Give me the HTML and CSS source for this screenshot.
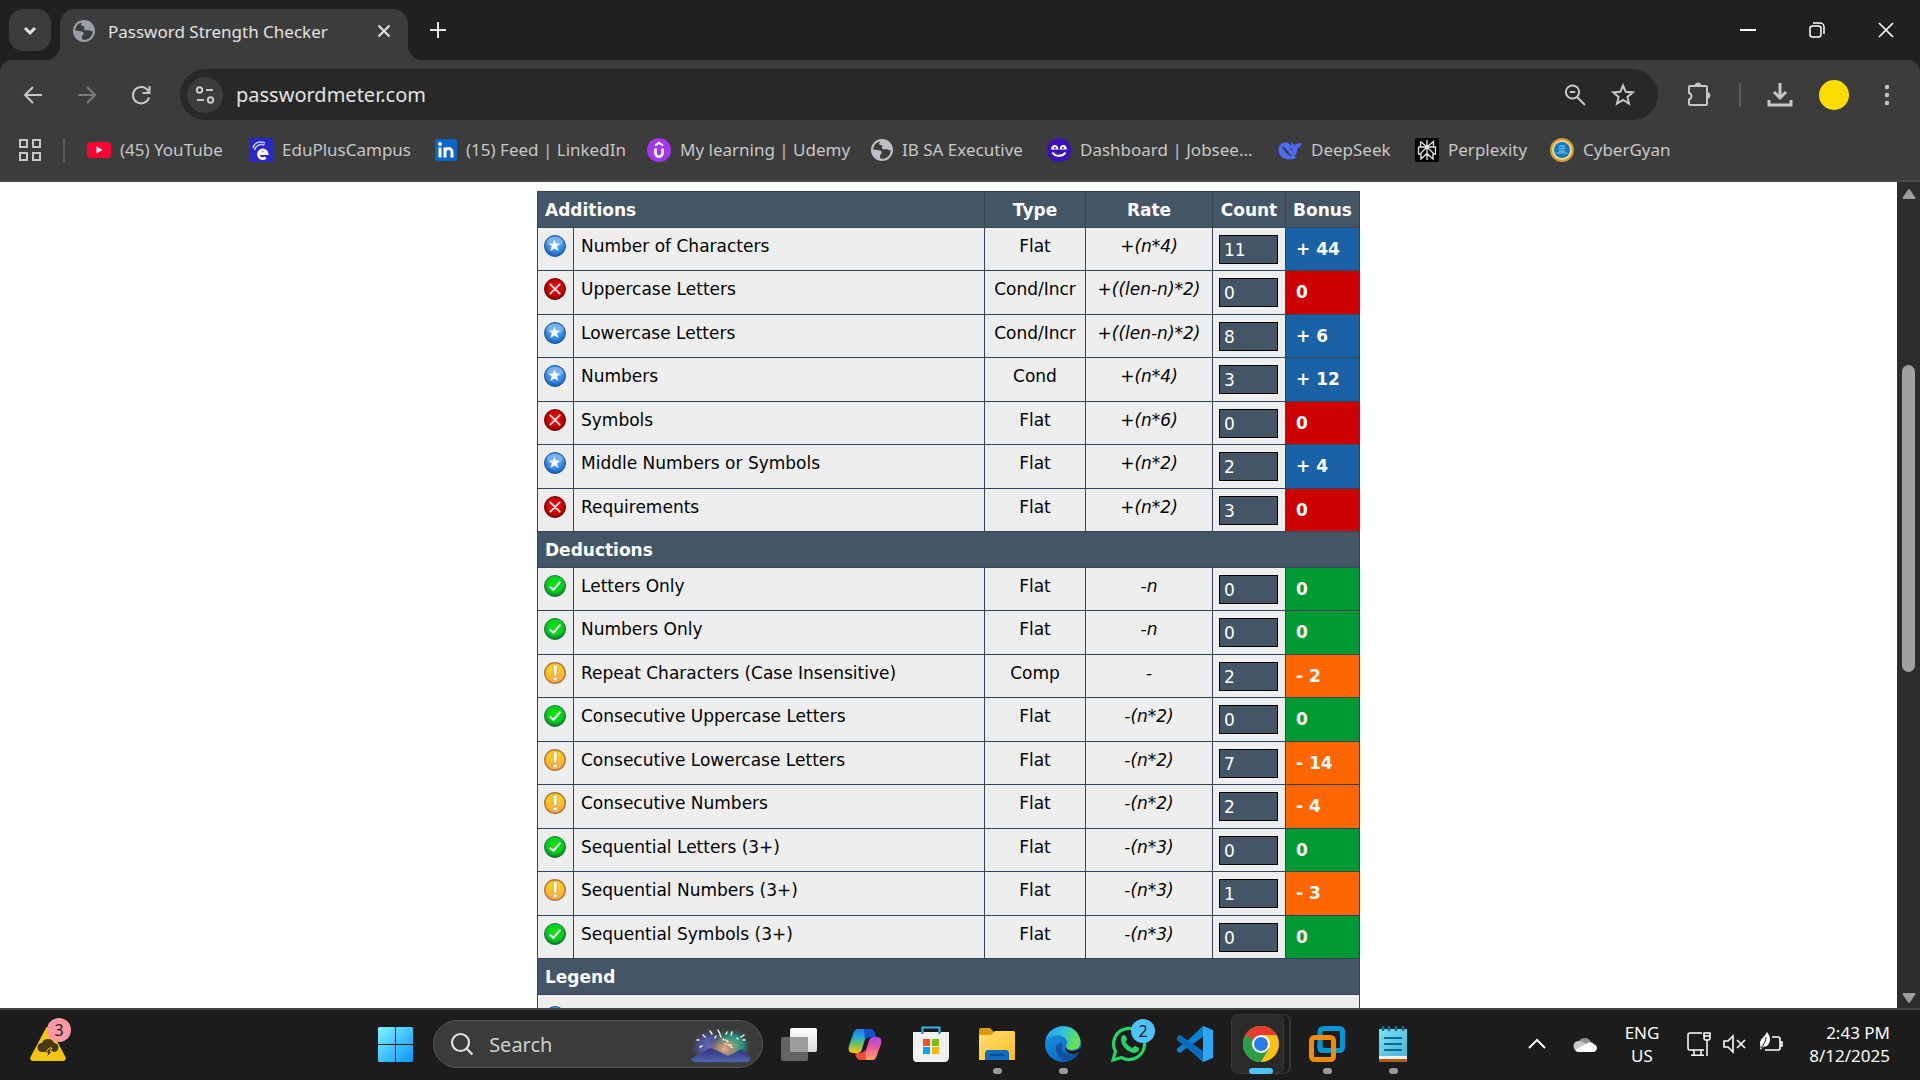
FILE: index.html
```html
<!DOCTYPE html>
<html lang="en">
<head>
<meta charset="utf-8">
<title>Password Strength Checker</title>
<link rel="stylesheet" href="styles.css">
</head>
<body>
<svg class="sprite" aria-hidden="true">
  <defs>
    <radialGradient id="gBlue" cx=".5" cy=".35" r=".65"><stop offset="0" stop-color="#5ea4ea"/><stop offset=".6" stop-color="#3f8fe6"/><stop offset="1" stop-color="#0f57b4"/></radialGradient>
    <radialGradient id="gRed" cx=".5" cy=".45" r=".55"><stop offset="0" stop-color="#e81018"/><stop offset=".65" stop-color="#cf0000"/><stop offset="1" stop-color="#7c0000"/></radialGradient>
    <radialGradient id="gGreen" cx=".5" cy=".4" r=".6"><stop offset="0" stop-color="#0be80f"/><stop offset=".65" stop-color="#04cc1c"/><stop offset="1" stop-color="#04722f"/></radialGradient>
    <linearGradient id="gAmber" x2="0" y2="1"><stop offset="0" stop-color="#fbdc12"/><stop offset="1" stop-color="#fca63c"/></linearGradient>
    <linearGradient id="gWin" x2="1" y2="1"><stop offset="0" stop-color="#7cf3ff"/><stop offset="1" stop-color="#0a95ff"/></linearGradient>
    <linearGradient id="gCopA" x2="0" y2="1"><stop offset="0" stop-color="#1b7de0"/><stop offset=".3" stop-color="#1ba5dc"/><stop offset=".6" stop-color="#5fbf6a"/><stop offset="1" stop-color="#fbc80a"/></linearGradient>
    <linearGradient id="gCopB" x2="0" y2="1"><stop offset="0" stop-color="#a348e8"/><stop offset=".5" stop-color="#f05a9a"/><stop offset="1" stop-color="#ffab5a"/></linearGradient>
    <linearGradient id="gFolder" x2="1" y2="1"><stop offset="0" stop-color="#ffdf7a"/><stop offset="1" stop-color="#fbbc1e"/></linearGradient>
    <linearGradient id="gEdgeA" x1="0" x2="1" y2=".4"><stop offset="0" stop-color="#2b9be6"/><stop offset=".5" stop-color="#2fc3dc"/><stop offset="1" stop-color="#6be04e"/></linearGradient>
    <linearGradient id="gEdgeB" x2=".6" y2="1"><stop offset="0" stop-color="#1f9de0"/><stop offset="1" stop-color="#0b63c4"/></linearGradient>
    <linearGradient id="gView" x2="0" y2="1"><stop offset="0" stop-color="#fff"/><stop offset="1" stop-color="#dcdcdc"/></linearGradient>
    <linearGradient id="gHill" x2="0" y2="1"><stop offset="0" stop-color="#33307e"/><stop offset="1" stop-color="#4e64ac"/></linearGradient>
    <radialGradient id="gSkyA"><stop offset="0" stop-color="#6e6cb8"/><stop offset=".5" stop-color="#50549c"/><stop offset="1" stop-color="#3c3c3c" stop-opacity="0"/></radialGradient>
    <radialGradient id="gSkyB"><stop offset="0" stop-color="#6fb694"/><stop offset=".6" stop-color="#268a7c"/><stop offset="1" stop-color="#3c3c3c" stop-opacity="0"/></radialGradient>
    <radialGradient id="gGlow"><stop offset="0" stop-color="#e8b088"/><stop offset=".5" stop-color="#c98468" stop-opacity=".7"/><stop offset="1" stop-color="#e8805c" stop-opacity="0"/></radialGradient>
    <linearGradient id="gNote" x2="1" y2="1"><stop offset="0" stop-color="#7fe0f2"/><stop offset="1" stop-color="#45b6d6"/></linearGradient>
  </defs>
  <symbol id="star" viewBox="0 0 22 22"><circle cx="11" cy="11" r="10.5" fill="url(#gBlue)" stroke="#1b5aa8"/><ellipse cx="11" cy="7" rx="8" ry="5" fill="#fff" opacity=".25"/><path d="M10.500 4.500l1.200 4 4.300.2-3 2.500 1.600 4.800-4.100-2.600-4.300 2.600 1.700-4.800-2.900-2.500 4.200-.2z" fill="#fff"/></symbol>
  <symbol id="cross" viewBox="0 0 22 22"><circle cx="11" cy="11" r="10.500" fill="url(#gRed)" stroke="#7c0505"/><path d="M6.300 6.300l9.400 9.400M15.700 6.300l-9.400 9.400" stroke="#f3e3e3" stroke-width="1.900" stroke-linecap="round"/></symbol>
  <symbol id="tick" viewBox="0 0 22 22"><circle cx="11" cy="11" r="10.500" fill="url(#gGreen)" stroke="#1d7a44"/><path d="M5.800 11.500l3.600 3.300 7-8.200" fill="none" stroke="#fff" stroke-width="2"/></symbol>
  <symbol id="warn" viewBox="0 0 22 22"><circle cx="11" cy="11" r="10.200" fill="url(#gAmber)" stroke="#b8763e" stroke-width="1.500"/><path d="M9 3h4.400l-.6 11h-3.200z" fill="#fff" stroke="#e08a50" stroke-width=".7"/><rect x="9" y="15" width="4.200" height="3.800" rx="1" fill="#fff" stroke="#e08a50" stroke-width=".7"/></symbol>
  <symbol id="globe" viewBox="0 0 22 22"><circle cx="11" cy="11" r="11" fill="currentColor"/><path d="M9 2.500C5 3.300 2.400 6.500 2.300 10.500l3.700.5c2.500.2 4 .5 4.600 2 .5 1.500-1 2-1.600 3.200-.4 1 .2 2.300 1 3.600 5.500.4 9.600-3.400 9.700-8.600-1.400.3-2.400-.2-3-.9-1.500-.2-4.800.3-5.500-.8-.5-1 .5-1.600.2-2.600-.5-1-2.800-.5-3.200-1.600C7.900 4 8.800 3.300 9 2.500z" fill="#3c3c3c"/></symbol>
</svg>

<header class="chrome">
  <div class="tabstrip">
    <button class="tab-search" aria-label="Search tabs"><svg viewBox="0 0 24 24" width="24" height="24"><path d="M7 10l5 5 5-5" class="line thick"/></svg></button>
    <div class="tab">
      <svg class="tab-icon" width="22" height="22"><use href="#globe"/></svg>
      <span class="tab-title">Password Strength Checker</span>
      <button class="icon-btn" aria-label="Close tab"><svg viewBox="0 0 24 24" width="24" height="24"><path d="M6.500 6.500l11 11M17.500 6.500l-11 11" class="line"/></svg></button>
    </div>
    <button class="new-tab" aria-label="New tab"><svg viewBox="0 0 24 24" width="24" height="24"><path d="M12 4v16M4 12h16" class="line"/></svg></button>
    <div class="win-buttons">
      <button aria-label="Minimize"><svg viewBox="0 0 24 24" width="24" height="24"><path d="M4 12h16" stroke="#fff" stroke-width="2"/></svg></button>
      <button aria-label="Restore"><svg viewBox="0 0 24 24" width="24" height="24" fill="none" stroke="#fff" stroke-width="1.500"><rect x="5" y="8" width="11" height="11" rx="2.500"/><path d="M8 5h7a4 4 0 0 1 4 4v7"/></svg></button>
      <button aria-label="Close"><svg viewBox="0 0 24 24" width="24" height="24"><path d="M5 5l14 14M19 5L5 19" stroke="#fff" stroke-width="1.700"/></svg></button>
    </div>
  </div>

  <div class="toolbar">
    <nav class="nav-buttons" aria-label="History">
      <button aria-label="Back"><svg viewBox="0 0 24 24" width="24" height="24"><path d="M21 12H4M12 4l-8 8 8 8" class="line"/></svg></button>
      <button aria-label="Forward" class="dim"><svg viewBox="0 0 24 24" width="24" height="24"><path d="M3 12h17M12 4l8 8-8 8" class="line"/></svg></button>
      <button aria-label="Reload"><svg viewBox="0 0 24 24" width="24" height="24"><path d="M19.500 8.500A8.200 8.200 0 1 0 20 14.500" class="line"/><path d="M20.500 3v7h-7" class="line"/></svg></button>
    </nav>
    <div class="omnibox">
      <button class="site-info" aria-label="View site information"><svg viewBox="0 0 22 22" width="22" height="22"><path d="M12 6h7M3 16h7" class="line"/><circle cx="5.500" cy="6" r="2.700" class="line"/><circle cx="16.500" cy="16" r="2.700" class="line"/></svg></button>
      <input type="text" class="url" aria-label="Address" value="passwordmeter.com">
      <button class="omni-btn" aria-label="Zoom"><svg viewBox="0 0 24 24" width="24" height="24"><circle cx="9.500" cy="9" r="6.600" class="line"/><path d="M6.800 9h5.400M14 14l8 8" class="line"/></svg></button>
      <button class="omni-btn" aria-label="Bookmark this tab"><svg viewBox="0 0 24 24" width="24" height="24"><path d="M12 2.500l2.700 6.300 6.900.6-5.200 4.500 1.600 6.700-6-3.600-6 3.600 1.600-6.700-5.200-4.500 6.900-.6z" class="line miter"/></svg></button>
    </div>
    <div class="tools">
      <button aria-label="Extensions"><svg viewBox="0 0 26 26" width="26" height="26"><path d="M4 4h16a1 1 0 0 1 1 1v17a1 1 0 0 1-1 1H4a1 1 0 0 1-1-1v-4.500a3.400 3.400 0 0 0 0-6.500V5a1 1 0 0 1 1-1z" class="line"/><path d="M9 4a3 3 0 0 1 6 0zM21 10.500a3 3 0 0 1 0 6z" fill="currentColor" stroke="currentColor"/></svg></button>
      <span class="divider"></span>
      <button aria-label="Downloads"><svg viewBox="0 0 26 26" width="26" height="26"><path d="M13 1v14M7 10l6 6 6-6M2 18v5h22v-5" class="line thick"/></svg></button>
      <button aria-label="Profile"><span class="avatar"></span></button>
      <button aria-label="Menu"><svg viewBox="0 0 24 24" width="24" height="24" fill="currentColor"><circle cx="12" cy="4" r="2.200"/><circle cx="12" cy="12" r="2.200"/><circle cx="12" cy="20" r="2.200"/></svg></button>
    </div>
  </div>

  <nav class="bookmarks" aria-label="Bookmarks">
    <button class="apps" aria-label="Tab groups"><svg viewBox="0 0 22 22" width="22" height="22" fill="none" stroke="currentColor" stroke-width="2"><path d="M1 1h7v7H1zM14 1h7v7h-7zM1 14h7v7H1zM14 14h7v7h-7z"/></svg></button>
    <span class="divider"></span>
    <a href="#yt"><svg viewBox="0 0 24 24" width="24" height="24"><rect y="4" width="24" height="16" rx="4" fill="#ff0033"/><path d="M9.500 8.500v7l6-3.500z" fill="#fff"/></svg><span>(45) YouTube</span></a>
    <a href="#edu"><svg viewBox="0 0 24 24" width="24" height="24"><rect width="24" height="24" rx="2" fill="#2a27c4"/><path d="M9 15.500h9a4.300 4.300 0 1 0-1.300 4" fill="none" stroke="#fff" stroke-width="2.800"/><path d="M4 10c1-5 6-7.500 12-5M5.500 12c1-4 5-6.500 10-5" fill="none" stroke="#c9c8ff" stroke-width="1.500"/></svg><span>EduPlusCampus</span></a>
    <a href="#li"><svg viewBox="0 0 22 22" width="22" height="22"><rect width="22" height="22" rx="2" fill="#0a66c2"/><path d="M3.500 8.500h3v10h-3z" fill="#fff"/><circle cx="5" cy="5" r="1.900" fill="#fff"/><path d="M10 18.500v-10M10 13c0-5 7-4.500 7 0v5.500" fill="none" stroke="#fff" stroke-width="3"/></svg><span>(15) Feed | LinkedIn</span></a>
    <a href="#ud"><svg viewBox="0 0 24 24" width="24" height="24"><circle cx="12" cy="12" r="12" fill="#a435f0"/><path d="M8.500 10.500v4.500c0 5 7 5 7 0v-4.500" fill="none" stroke="#fff" stroke-width="2.700"/><path d="M8 7.500l4-2.700 4 2.700" fill="none" stroke="#fff" stroke-width="2"/></svg><span>My learning | Udemy</span></a>
    <a href="#ib"><svg class="pale" width="22" height="22"><use href="#globe"/></svg><span>IB SA Executive</span></a>
    <a href="#job"><svg viewBox="0 0 24 24" width="24" height="24"><circle cx="12" cy="12" r="12" fill="#3c12b8"/><path d="M4 11.500a3.700 4.600 0 0 1 7.400 0zM12.600 11.500a3.700 4.600 0 0 1 7.400 0z" fill="#fff"/><path d="M5.500 14.500c3 4.500 10 4.500 13 0" fill="none" stroke="#fff" stroke-width="2.200"/><circle cx="8" cy="9.700" r="1" fill="#3c12b8"/><circle cx="16" cy="9.700" r="1" fill="#3c12b8"/></svg><span>Dashboard | Jobsee...</span></a>
    <a href="#ds"><svg viewBox="0 0 24 24" width="24" height="24" fill="#4d6bfe"><path d="M14 3.500c.3 2 1.500 3 3 3.700 1-1.800 3.500-1.500 6.500-2.700-.3 3-1.500 5-4 5.600 0 4-1.500 6.500-3 8l2.500 2-3.500.3C9.500 23 1 20 .5 12 .3 8 3 5 6.500 4.500c3-.3 5 1 7 3.500-.7-1.500-.5-3 .5-4.500z"/><path d="M3.500 8.500c3-.3 5 2.500 6.500 5 1.500 2.200 2.500 3.800 4.500 4.700-3 0-4.500-1.200-6.500-3.200-1.200-2-3-4.500-4.500-6.500z" fill="#3c3c3c"/><path d="M11.500 10c2.500-.3 3.500 2 3.500 4-.8-1.800-2-2.200-3.500-4z" fill="#3c3c3c"/></svg><span>DeepSeek</span></a>
    <a href="#px"><svg viewBox="0 0 24 24" width="24" height="24"><rect width="24" height="24" rx="2" fill="#000"/><path d="M12 2v20M5.500 3.500L12 9l6.500-5.500V9M5.500 3.500V9M3.500 9h17v7h-2.500M3.500 9v7H6M12 9l-6 6v6l6-5.500 6 5.500v-6z" fill="none" stroke="#e8e8e8" stroke-width="1.300"/></svg><span>Perplexity</span></a>
    <a href="#cg"><svg viewBox="0 0 24 24" width="24" height="24"><circle cx="12" cy="12" r="12" fill="#cf9a3c"/><circle cx="12" cy="12" r="10" fill="#f3da7c"/><circle cx="12" cy="12" r="8" fill="#1477bf"/><path d="M9 8h6M8.500 10.500h7M9 13h6" stroke="#6cb8e4" stroke-width="1.500"/><path d="M6.500 15h11" stroke="#8cc8ea" stroke-width="1"/></svg><span>CyberGyan</span></a>
  </nav>
</header>

<div class="viewport">
  <main class="page">
    <table class="score">
      <colgroup><col class="c-icon"><col><col class="c-type"><col class="c-rate"><col class="c-count"><col class="c-bonus"></colgroup>
      <tbody>
        <tr><th colspan="2" class="left" scope="col">Additions</th><th scope="col">Type</th><th scope="col">Rate</th><th scope="col">Count</th><th scope="col">Bonus</th></tr>
      </tbody>
      <tbody class="rows">
        <tr><td><svg class="status"><use href="#star"/></svg></td><td>Number of Characters</td><td>Flat</td><td>+(n*4)</td><td><input type="text" value="11" aria-label="Number of Characters count"></td><td class="blue">+ 44</td></tr>
        <tr><td><svg class="status"><use href="#cross"/></svg></td><td>Uppercase Letters</td><td>Cond/Incr</td><td>+((len-n)*2)</td><td><input type="text" value="0" aria-label="Uppercase Letters count"></td><td class="red">0</td></tr>
        <tr><td><svg class="status"><use href="#star"/></svg></td><td>Lowercase Letters</td><td>Cond/Incr</td><td>+((len-n)*2)</td><td><input type="text" value="8" aria-label="Lowercase Letters count"></td><td class="blue">+ 6</td></tr>
        <tr><td><svg class="status"><use href="#star"/></svg></td><td>Numbers</td><td>Cond</td><td>+(n*4)</td><td><input type="text" value="3" aria-label="Numbers count"></td><td class="blue">+ 12</td></tr>
        <tr><td><svg class="status"><use href="#cross"/></svg></td><td>Symbols</td><td>Flat</td><td>+(n*6)</td><td><input type="text" value="0" aria-label="Symbols count"></td><td class="red">0</td></tr>
        <tr><td><svg class="status"><use href="#star"/></svg></td><td>Middle Numbers or Symbols</td><td>Flat</td><td>+(n*2)</td><td><input type="text" value="2" aria-label="Middle Numbers or Symbols count"></td><td class="blue">+ 4</td></tr>
        <tr><td><svg class="status"><use href="#cross"/></svg></td><td>Requirements</td><td>Flat</td><td>+(n*2)</td><td><input type="text" value="3" aria-label="Requirements count"></td><td class="red">0</td></tr>
      </tbody>
      <tbody>
        <tr><th colspan="6" class="left" scope="colgroup">Deductions</th></tr>
      </tbody>
      <tbody class="rows">
        <tr><td><svg class="status"><use href="#tick"/></svg></td><td>Letters Only</td><td>Flat</td><td>-n</td><td><input type="text" value="0" aria-label="Letters Only count"></td><td class="green">0</td></tr>
        <tr><td><svg class="status"><use href="#tick"/></svg></td><td>Numbers Only</td><td>Flat</td><td>-n</td><td><input type="text" value="0" aria-label="Numbers Only count"></td><td class="green">0</td></tr>
        <tr><td><svg class="status"><use href="#warn"/></svg></td><td>Repeat Characters (Case Insensitive)</td><td>Comp</td><td>-</td><td><input type="text" value="2" aria-label="Repeat Characters count"></td><td class="orange">- 2</td></tr>
        <tr><td><svg class="status"><use href="#tick"/></svg></td><td>Consecutive Uppercase Letters</td><td>Flat</td><td>-(n*2)</td><td><input type="text" value="0" aria-label="Consecutive Uppercase Letters count"></td><td class="green">0</td></tr>
        <tr><td><svg class="status"><use href="#warn"/></svg></td><td>Consecutive Lowercase Letters</td><td>Flat</td><td>-(n*2)</td><td><input type="text" value="7" aria-label="Consecutive Lowercase Letters count"></td><td class="orange">- 14</td></tr>
        <tr><td><svg class="status"><use href="#warn"/></svg></td><td>Consecutive Numbers</td><td>Flat</td><td>-(n*2)</td><td><input type="text" value="2" aria-label="Consecutive Numbers count"></td><td class="orange">- 4</td></tr>
        <tr><td><svg class="status"><use href="#tick"/></svg></td><td>Sequential Letters (3+)</td><td>Flat</td><td>-(n*3)</td><td><input type="text" value="0" aria-label="Sequential Letters count"></td><td class="green">0</td></tr>
        <tr><td><svg class="status"><use href="#warn"/></svg></td><td>Sequential Numbers (3+)</td><td>Flat</td><td>-(n*3)</td><td><input type="text" value="1" aria-label="Sequential Numbers count"></td><td class="orange">- 3</td></tr>
        <tr><td><svg class="status"><use href="#tick"/></svg></td><td>Sequential Symbols (3+)</td><td>Flat</td><td>-(n*3)</td><td><input type="text" value="0" aria-label="Sequential Symbols count"></td><td class="green">0</td></tr>
      </tbody>
      <tbody>
        <tr><th colspan="6" class="left" scope="colgroup">Legend</th></tr>
        <tr class="legend"><td colspan="6"><svg class="status"><use href="#star"/></svg></td></tr>
      </tbody>
    </table>
  </main>
  <div class="scrollbar">
    <svg viewBox="0 0 14 10" width="14" height="10"><path d="M7 1l5.500 8h-11z" class="arrow"/></svg>
    <div class="track"><div class="thumb"></div></div>
    <svg viewBox="0 0 14 10" width="14" height="10"><path d="M7 9l5.500-8h-11z" class="arrow"/></svg>
  </div>
</div>

<footer class="taskbar">
  <button class="weather" aria-label="Weather alerts"><svg viewBox="0 0 36 36" width="36" height="36"><path d="M16 2c1-1.600 3-1.600 4 0l15.500 29c.8 2-.4 4-2.500 4H3c-2.100 0-3.300-2-2.500-4z" fill="#f2c511"/><path d="M12 26a4.500 4.500 0 0 1 0-9c1-5.500 11-5.500 12 0a4.500 4.500 0 0 1 0 9z" fill="#4a3a10"/><path d="M16 26l3-4h3l-2 3.500h2.500L16 32l2-5h-3z" fill="#4a3a10" stroke="#f2c511"/></svg><span class="badge pink">3</span></button>
  <div class="task-items">
    <button class="start" aria-label="Start"><svg viewBox="0 0 35 35" width="35" height="35" fill="url(#gWin)"><path d="M1 0h16v17H0V1zM18 0h16l1 1v16H18zM0 18h17v17H1l-1-1zM18 18h17v16l-1 1H18z"/></svg></button>
    <label class="search">
      <svg viewBox="0 0 24 24" width="24" height="24" fill="none" stroke="#e2e2e2" stroke-width="2.200"><circle cx="10.500" cy="10.500" r="8.500"/><path d="M16.500 16.500l6 6"/></svg>
      <input type="search" placeholder="Search" aria-label="Search">
      <svg viewBox="0 0 62 38" width="62" height="38"><ellipse cx="20" cy="22" rx="21" ry="20" fill="url(#gSkyA)"/><ellipse cx="41" cy="22" rx="21" ry="20" fill="url(#gSkyB)"/><ellipse cx="34" cy="24" rx="14" ry="12" fill="url(#gGlow)"/><path d="M1 34l8-5 11-6 8 3 10 5 8-4 6-3 9 9c-1 3-3 4-5 4H6c-3 0-4-1-5-3z" fill="url(#gHill)"/><g stroke="#fff3dc" stroke-width="1.500" stroke-linecap="round"><path d="M20 6l2 3M28 5l2 4M13 10l2 2M7 15h2M10 22l2-1M26 11l-1 2M36 15l2 2M42 7l-1 3M54 10l-3 2M55 15h-2M47 13l1 1M38 20h3M36 9l1-2M30 10l1 2M33 14l1 1M35 19h1M41 22h1"/></g></svg>
    </label>
    <button class="view" aria-label="Task view"><svg viewBox="0 0 36 36" width="36" height="36"><rect x="9" y="2" width="27" height="24" rx="2" fill="url(#gView)"/><rect y="11" width="27" height="24" rx="2" fill="#6b6b6b" opacity=".9"/><path d="M9 11h18v15H9z" fill="#9c9c9c"/></svg></button>
    <button aria-label="Copilot"><svg viewBox="0 0 36 36" width="36" height="36"><path d="M11 3h13c-3 1-4 3-5 7l-4 13c-1 3-2 4-5 4H6c-4 0-5-3-4-7l4-12c1-3 2-5 5-5z" fill="url(#gCopA)"/><path d="M17 3h6c4 0 5 3 6 8h-5c-3 0-5 1-6 3z" fill="#174fd0"/><path d="M25 34H13c3-1 4-3 5-7l4-12c1-3 2-4 5-4h3c4 0 5 3 4 7l-4 11c-1 3-2 5-5 5z" fill="url(#gCopB)"/><path d="M19 34h-5c-4 0-5-3-6-7h4c3 0 5-1 6-3z" fill="#ef4a3c"/></svg></button>
    <button aria-label="Microsoft Store"><svg viewBox="0 0 36 36" width="36" height="36"><path d="M9.500 8V1.500h17V8" fill="none" stroke="#35b6ef" stroke-width="2"/><path d="M0 6h36v25c0 3-2 5-4 5H4c-3 0-4-2-4-5z" fill="#f2f2f2"/><path d="M10 13h7v7h-7z" fill="#f25022"/><path d="M19 13h7v7h-7z" fill="#7fba00"/><path d="M10 21h7v7h-7z" fill="#00a4ef"/><path d="M19 21h7v7h-7z" fill="#ffb900"/><path d="M9.500 6v2M26.500 6v2" stroke="#1c7fc4" stroke-width="2"/></svg></button>
    <button class="running" aria-label="File Explorer"><svg viewBox="0 0 36 36" width="36" height="36"><path d="M0 4c0-1 1-2 2-2h9l4 4h18v10H0z" fill="#dd9b06"/><path d="M0 9h12l4-4h19l1 1v28H0z" fill="url(#gFolder)"/><path d="M6 34v-6c0-3 1-4 4-4h16c3 0 4 1 4 4v6z" fill="#0f6cbf"/><path d="M11 29h14" stroke="#0a4d8f" stroke-width="2"/></svg></button>
    <button class="running" aria-label="Edge"><svg viewBox="0 0 36 36" width="36" height="36"><circle cx="18" cy="18" r="18" fill="url(#gEdgeB)"/><path d="M1 13C4-1 30-6 35 13c2 8-3 11-8 11-5 0-7-2-6-4 5-7-6-16-20-7z" fill="url(#gEdgeA)"/><path d="M11 20c-1 7 4 14 11 15 5-1 9-4 11-8-3 1-8 3-13 0-4-2-4-6-2-9-3-1-6 0-7 2z" fill="#12509e"/><path d="M21 20c0 3 3 5 7 5 3-.3 5-1.300 7-2.500v3c-3 2-5 2.500-8 2.500-5 0-8-5-6-8z" fill="#1c1c1c"/></svg></button>
    <button aria-label="WhatsApp"><svg viewBox="0 0 36 36" width="36" height="36"><path d="M2 34l2.500-8.500A15.500 15.500 0 1 1 10.500 31.500z" fill="none" stroke="#25d366" stroke-width="3.200"/><path d="M11 10c1-1.500 3-1.500 3.500 0l1.500 3c.5 1-1 2-1.500 3 2 3 4 5 7 6 1-1 2-2.500 3-2l3.500 2c1 2-2 5-5 5-6-.5-13-7-13-13 0-2 .3-3 1-4z" fill="#25d366"/></svg><span class="badge sky">2</span></button>
    <button aria-label="Visual Studio Code"><svg viewBox="0 0 36 36" width="36" height="36"><path d="M26 0L10 15 3 9 0 11v3l6 4-6 4.500V25l3 2 7-5.500L26 36l1-10-11-8 11-8z" fill="#0d7fcf"/><path d="M0 11l3-2 24 17v10L0 14z" fill="#0a6cb8"/><path d="M26 0l10 4v28l-10 4z" fill="#2aa8f5"/></svg></button>
    <button class="running active" aria-label="Chrome"><svg viewBox="0 0 36 36" width="36" height="36"><circle cx="18" cy="18" r="18" fill="#fbc116"/><path d="M2.400 9A18 18 0 0 0 18 36l8-13.500-8-4.500z" fill="#2b9f48"/><path d="M2.400 9A18 18 0 0 1 33.600 9H18l-8 13.500z" fill="#e33b2e"/><path d="M2.400 9l7.800 13.500L18 18z" fill="#2b9f48"/><circle cx="18" cy="18" r="9" fill="#fff"/><circle cx="18" cy="18" r="7" fill="#2a7bea"/></svg></button>
    <button class="running" aria-label="VMware Workstation"><svg viewBox="0 0 36 36" width="36" height="36" fill="none" stroke-width="5"><rect x="11" y="2.500" width="22.500" height="22" rx="3" stroke="#0095d6"/><rect x="2.500" y="11.500" width="22" height="22" rx="3" stroke="#f38b00"/><path d="M11 16v5.500c0 2 1 3 3 3h6" stroke="#0095d6"/></svg></button>
    <button class="running" aria-label="Notepad"><svg viewBox="0 0 36 36" width="36" height="36"><path d="M4 31h28v4a1 1 0 0 1-1 1H5a1 1 0 0 1-1-1z" fill="#b35a14"/><path d="M4 29h28v4H4z" fill="#f2f2f2"/><path d="M4 3h28v27H4z" fill="url(#gNote)"/><path d="M9 12h18M9 18h18M9 24h18" stroke="#0b6a92" stroke-width="2"/><path d="M8 0v5M14 0v5M21 0v5M28 0v5" stroke="#0f6f90" stroke-width="2.500"/></svg></button>
  </div>
  <div class="tray">
    <button aria-label="Show hidden icons"><svg viewBox="0 0 18 18" width="18" height="18" fill="none" stroke="#fff" stroke-width="2"><path d="M1 13l8-8 8 8"/></svg></button>
    <button class="cloud" aria-label="OneDrive"><svg viewBox="0 0 24 18" width="24" height="18"><path d="M5 8a7 7 0 0 1 13-1l-7 4z" fill="#8f8f8f"/><path d="M6 16a5 5 0 0 1-1-10c3-.5 5 .5 8 3l-6 7z" fill="#c9c9c9"/><path d="M2 15l11-6c3-3 8-2 8 .5 4 0 4 7.500-1 7.500H5c-1 0-2-1-3-2z" fill="#fff"/></svg></button>
    <button class="lang" aria-label="Input language">ENG<br>US</button>
    <button class="quick" aria-label="Quick settings">
      <svg viewBox="0 0 24 24" width="24" height="24" fill="none" stroke="#fff" stroke-width="1.500"><path d="M15 1H3a2 2 0 0 0-2 2v13a2 2 0 0 0 2 2h14M7 18v5M14 18v5M4 23.200h13"/><path d="M17 1h6v5a2 2 0 0 1-2 2h-2a2 2 0 0 1-2-2zM17 4h6M20 8v16"/></svg>
      <svg viewBox="0 0 24 24" width="24" height="24" fill="none" stroke="#fff" stroke-width="1.600"><path d="M1 9h4l5-5v16l-5-5H1zM14 8l8 8M22 8l-8 8"/></svg>
      <svg viewBox="0 0 24 24" width="24" height="24"><path d="M13 5h6a2 2 0 0 1 2 2v9a2 2 0 0 1-2 2H6M21 10h2v4h-2" fill="none" stroke="#fff" stroke-width="1.600"/><path d="M8 0c3 4 5 9 0 14-2 1-4 0-5 2l-2 2c0-2 1-3 0-5-1-6 5-8 7-13z" fill="#fff"/><path d="M7 5c0 4-2 7-5 11" stroke="#1c1c1c" fill="none"/></svg>
    </button>
    <button class="clock" aria-label="Clock">2:43 PM<br>8/12/2025</button>
  </div>
</footer>
</body>
</html>
```
FILE: styles.css
```css
* { box-sizing: border-box; }

body {
  margin: 0;
  height: 100vh;
  display: flex;
  flex-direction: column;
  overflow: hidden;
  background: #fff;
  font-family: "Noto Sans", "Open Sans", sans-serif;
}

button {
  display: flex;
  align-items: center;
  justify-content: center;
  padding: 0;
  border: 0;
  background: none;
  color: inherit;
  font: inherit;
}

svg { display: block; flex: none; }
.sprite { position: absolute; width: 0; height: 0; }

.line {
  fill: none;
  stroke: currentColor;
  stroke-width: 2;
}
.line.thick { stroke-width: 3; }
.line.miter { stroke-linejoin: miter; }

/* Browser frame */
.chrome {
  flex: none;
  background: #1f2120;
  color: #c7c7c7;
  border-bottom: 2px solid #4a4a4a;
}

.tabstrip {
  display: flex;
  height: 60px;
  padding: 9px 0 0 9px;
  color: #e3e3e3;
}
.tab-search {
  width: 42px;
  height: 42px;
  border-radius: 14px;
  background: #3c3c3c;
}
.tab {
  position: relative;
  display: flex;
  align-items: center;
  width: 348px;
  margin-left: 9px;
  padding: 0 12px 8px 13px;
  border-radius: 15px 15px 0 0;
  background: #3c3c3c;
  font-size: 17px;
}
.tab::before,
.tab::after {
  content: "";
  position: absolute;
  bottom: 0;
  width: 14px;
  height: 14px;
}
.tab::before {
  left: -14px;
  background: radial-gradient(circle at 0 0, transparent 14px, #3c3c3c 14px);
}
.tab::after {
  right: -14px;
  background: radial-gradient(circle at 100% 0, transparent 14px, #3c3c3c 14px);
}
.tab-icon { color: #9aa0a6; }
.tab-title { flex: 1; padding: 2px 0 0 13px; white-space: nowrap; }
.new-tab { width: 42px; height: 42px; margin-left: 9px; }
.win-buttons { display: flex; height: 42px; margin-left: auto; }
.win-buttons button { width: 69px; }

.toolbar {
  display: flex;
  align-items: center;
  height: 69px;
  padding: 0 6px 0 6px;
  border-radius: 12px 12px 0 0;
  background: #3c3c3c;
}
.nav-buttons { display: flex; width: 174px; }
.nav-buttons button { width: 54px; height: 42px; }
.dim { color: #7c7c7c; }
.omnibox {
  flex: 1;
  display: flex;
  align-items: center;
  height: 51px;
  padding: 0 11px 0 7px;
  border-radius: 26px;
  background: #282828;
}
.site-info {
  width: 36px;
  height: 36px;
  border-radius: 50%;
  background: #3c3c3c;
}
.url {
  flex: 1;
  min-width: 0;
  padding: 0 0 0 13px;
  border: 0;
  background: none;
  color: #e3e3e3;
  font: 20px "Noto Sans", "Open Sans", sans-serif;
}
.omni-btn { width: 48px; height: 48px; }
.tools { display: flex; align-items: center; width: 256px; }
.tools button { width: 54px; height: 42px; }
.tools button:first-child { width: 82px; }
.tools .divider { margin-right: 12px; }
.divider { width: 2px; height: 24px; background: #5c5c5c; }
.avatar {
  width: 30px;
  height: 30px;
  border-radius: 50%;
  background: #ffdd00;
}

.bookmarks {
  display: grid;
  grid-template-columns: 44px 24px 162px 186px 212px 224px 176px 231px 137px 135px 1fr;
  align-items: center;
  height: 51px;
  padding: 0 0 9px 19px;
  background: #3c3c3c;
  font-size: 17px;
}
.bookmarks a {
  display: flex;
  align-items: center;
  gap: 9px;
  color: inherit;
  text-decoration: none;
  white-space: nowrap;
}
.bookmarks a span { padding-bottom: 2px; }
.apps { justify-content: flex-start; }
.pale { color: #bdc1c6; }

/* Page */
.viewport { flex: 1; min-height: 0; display: flex; }
.page {
  flex: 1;
  padding-top: 9px;
  overflow: hidden;
}
.score {
  width: 823px;
  margin: 0 auto;
  border-collapse: collapse;
  table-layout: fixed;
  color: #000;
  font-family: "DejaVu Sans", sans-serif;
  font-size: 17px;
  line-height: 20px;
}
.c-icon { width: 36px; }
.c-type { width: 101px; }
.c-rate { width: 127px; }
.c-count { width: 73px; }
.c-bonus { width: 74px; }
.score th,
.score td {
  padding: 0;
  border: 1px solid #334455;
  text-align: center;
  vertical-align: top;
}
.score th {
  height: 36px;
  background: #445566;
  color: #fff;
  vertical-align: middle;
}
.score th.left { padding-left: 7px; text-align: left; }
.score td { background: #eee; }
.rows tr { height: 43px; }
.rows tr:nth-child(even) { height: 44px; }
.rows td:nth-child(n+2) { padding-top: 8px; }
.rows td:nth-child(2) { padding-left: 7px; text-align: left; }
.rows td:nth-child(4) { font-style: italic; }
.score td:nth-child(5) { padding: 7px 0 0 6px; text-align: left; }
.score td:nth-child(6) {
  padding: 11px 0 0 10px;
  color: #fff;
  font-weight: bold;
  text-align: left;
}
.status { width: 22px; height: 22px; margin: 7px 0 0 6px; }
.legend td { height: 43px; }
.legend .status { margin-top: 11px; }
.score input {
  display: block;
  width: 59px;
  height: 29px;
  padding: 0 4px;
  border: 1px solid #000;
  background: #445566;
  color: #fff;
  font: 17px "DejaVu Sans", sans-serif;
}
.score .blue { background: #1b61a5; }
.score .red { background: #c00; }
.score .green { background: #093; }
.score .orange { background: #f60; }

.scrollbar {
  display: flex;
  flex-direction: column;
  align-items: center;
  width: 23px;
  padding: 7px 0 5px;
  background: #2c2c2c;
}
.arrow { fill: #9f9f9f; stroke: #9f9f9f; stroke-linejoin: round; stroke-width: 2; }
.track {
  flex: 1;
  display: grid;
  grid-template-rows: 166fr 307fr 321fr;
}
.thumb {
  grid-row: 2;
  width: 13px;
  border-radius: 7px;
  background: #9f9f9f;
}

/* Taskbar */
.taskbar {
  flex: none;
  display: grid;
  grid-template-columns: 11fr auto 15fr;
  align-items: center;
  height: 72px;
  padding-bottom: 2px;
  border-top: 2px solid #444;
  background: #1c1c1c;
  color: #fff;
  font-size: 17px;
}
.weather { position: relative; justify-self: start; margin-left: 30px; }
.badge {
  position: absolute;
  display: flex;
  align-items: center;
  justify-content: center;
  width: 24px;
  height: 24px;
  border-radius: 50%;
  color: #1c1c1c;
  font-size: 16px;
  line-height: 24px;
}
.pink { top: -8px; right: -5px; background: #ff99a4; }
.sky { top: 5px; right: 7px; background: #4cc2ff; }

.task-items { display: flex; align-items: center; }
.task-items button { position: relative; width: 66px; height: 60px; }
.task-items .start { width: 71px; padding-right: 5px; }
.search {
  display: flex;
  align-items: center;
  width: 330px;
  height: 48px;
  margin-right: 3px;
  padding: 0 10px 0 16px;
  border: 1px solid #565656;
  border-radius: 24px;
  background: #3b3b3b;
}
.search input {
  flex: 1;
  min-width: 0;
  padding: 0 0 0 15px;
  border: 0;
  background: none;
  color: #cfcfcf;
  font: 20px "Noto Sans", "Open Sans", sans-serif;
}
.search input::placeholder { color: #cfcfcf; }
.running::after {
  content: "";
  position: absolute;
  bottom: 0;
  left: 29px;
  width: 9px;
  height: 6px;
  border-radius: 3px;
  background: #9a9a9a;
}
.active::before {
  content: "";
  position: absolute;
  z-index: -1;
  inset: 0 10px 0 3px;
  border: 1px solid #3a3a3a;
  border-radius: 7px;
  background: #2a2a2a;
  box-shadow: 6px 0 0 -1px #1c1c1c, 7px 0 0 0 #363636;
}
.active { z-index: 0; }
.active::after { left: 21px; width: 24px; background: #4cc2ff; }

.tray {
  display: flex;
  align-items: center;
  justify-self: end;
  padding-right: 30px;
  line-height: 23px;
  white-space: nowrap;
}
.cloud { margin-left: 27px; }
.lang { width: 90px; text-align: center; }
.quick { gap: 12px; }
.clock { width: 107px; justify-content: flex-end; text-align: right; }
```
